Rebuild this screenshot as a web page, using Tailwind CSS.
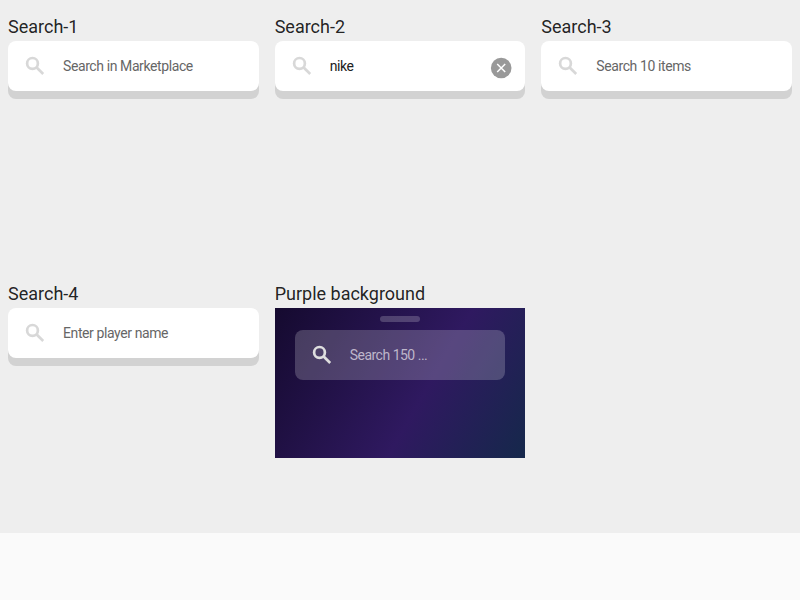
<!DOCTYPE html>
<html lang="en">
<head>
<meta charset="utf-8">
<title>Search</title>
<script src="https://cdn.jsdelivr.net/npm/@tailwindcss/browser@4"></script>
</head>
<body class="bg-[#fafafa] font-['Roboto',sans-serif] text-black/87">
<svg class="hidden"><symbol id="search" viewBox="0 0 24 24"><g fill="none" stroke="currentColor" stroke-width="2.7"><circle cx="9.5" cy="9.4" r="5.4"/><path d="M13.4 13.3l6.8 6.7"/></g></symbol></svg>
<main class="grid h-[533.33px] grid-cols-3 grid-rows-2 bg-[#eeeeee]">
  <section class="px-2 pt-4">
    <h2 class="h-[25px] text-[18px] leading-[21px]">Search-1</h2>
    <div class="flex h-[50px] items-center rounded-lg bg-white pl-[15px] shadow-[0_8px_0_#d2d2d2]">
      <svg class="size-6 text-[#d8d8d8]"><use href="#search"/></svg>
      <span class="ml-4 text-[14px] tracking-[-0.4px] text-[#666]">Search in Marketplace</span>
    </div>
  </section>
  <section class="px-2 pt-4">
    <h2 class="h-[25px] text-[18px] leading-[21px]">Search-2</h2>
    <div class="flex h-[50px] items-center rounded-lg bg-white pr-[12px] pl-[15px] shadow-[0_8px_0_#d2d2d2]">
      <svg class="size-6 text-[#d8d8d8]"><use href="#search"/></svg>
      <span class="ml-4 text-[14px] tracking-[-0.4px] text-[#212121]">nike</span>
      <svg class="mt-[3px] ml-auto size-6" viewBox="0 0 24 24"><circle cx="12.2" cy="12" r="10.3" fill="#999"/><path d="M8.2 8l8 8M16.2 8l-8 8" stroke="#fff" stroke-width="1.5"/></svg>
    </div>
  </section>
  <section class="px-2 pt-4">
    <h2 class="h-[25px] text-[18px] leading-[21px]">Search-3</h2>
    <div class="flex h-[50px] items-center rounded-lg bg-white pl-[15px] shadow-[0_8px_0_#d2d2d2]">
      <svg class="size-6 text-[#d8d8d8]"><use href="#search"/></svg>
      <span class="ml-4 text-[14px] tracking-[-0.4px] text-[#666]">Search 10 items</span>
    </div>
  </section>
  <section class="px-2 pt-4">
    <h2 class="h-[25px] text-[18px] leading-[21px]">Search-4</h2>
    <div class="flex h-[50px] items-center rounded-lg bg-white pl-[15px] shadow-[0_8px_0_#d2d2d2]">
      <svg class="size-6 text-[#d8d8d8]"><use href="#search"/></svg>
      <span class="ml-4 pt-px text-[14px] tracking-[-0.4px] text-[#666]">Enter player name</span>
    </div>
  </section>
  <section class="px-2 pt-4">
    <h2 class="h-[25px] text-[18px] leading-[21px]">Purple background</h2>
    <div class="h-[150px] bg-[linear-gradient(120deg,#150a2f_0%,#2f1960_59%,#15284b_100%)] px-5 pt-2">
      <div class="mx-auto h-[6px] w-10 rounded-[3px] bg-white/20"></div>
      <div class="mt-2 flex h-[50px] items-center rounded-lg bg-white/20 pl-[15px]">
        <svg class="size-6 text-[#dedede]"><use href="#search"/></svg>
        <span class="ml-4 pt-px text-[14px] tracking-[-0.5px] text-[#beb6ca]">Search 150 ...</span>
      </div>
    </div>
  </section>
</main>
</body>
</html>
